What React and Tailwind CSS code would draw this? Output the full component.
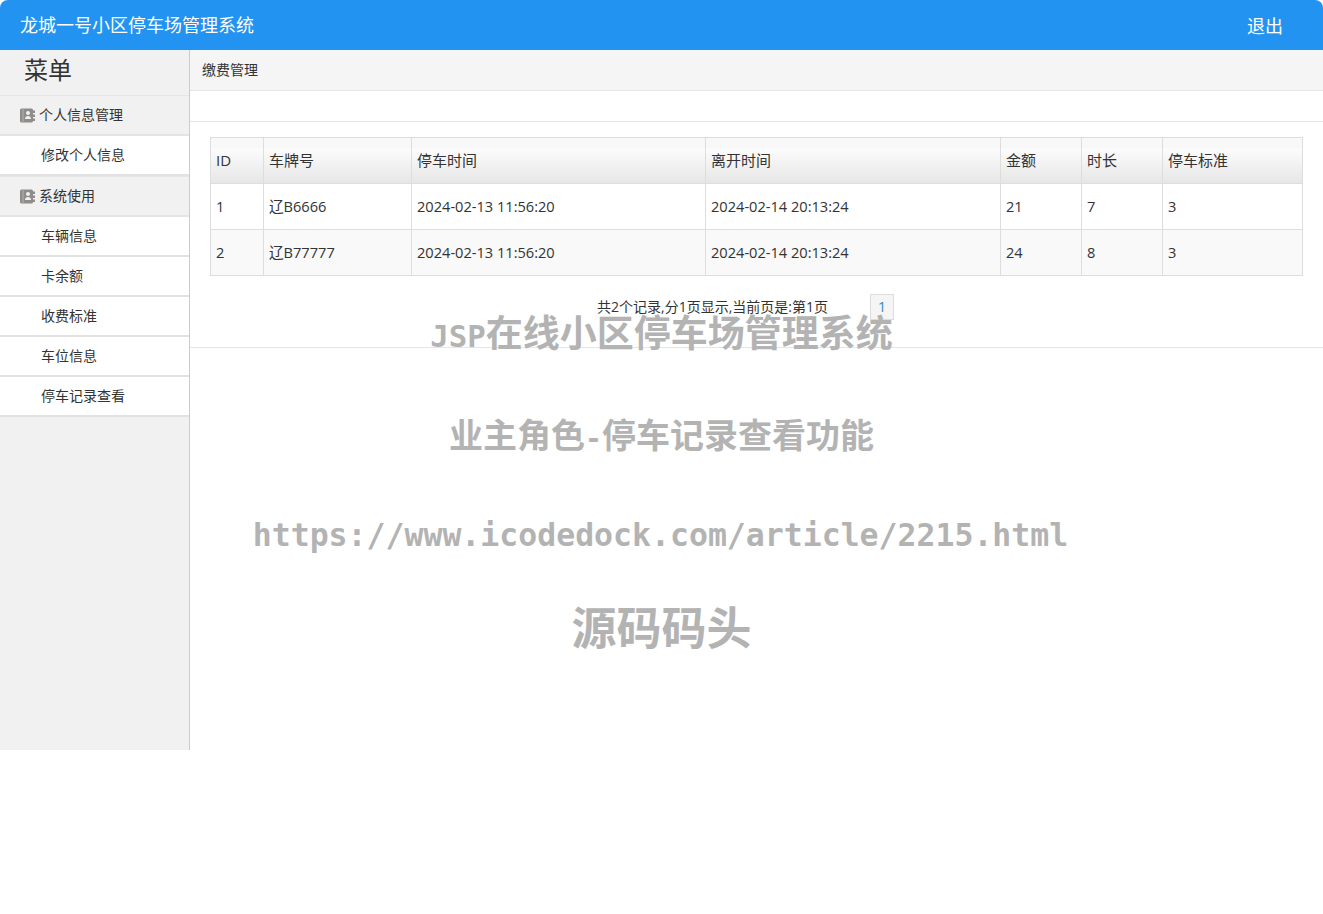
import React from 'react';

const cnFont = "font-['Open_Sans','Noto_Sans_CJK_SC',sans-serif]";

const BookIcon = () => (
  <svg width="15" height="15" viewBox="0 0 15 15" className="shrink-0">
    <rect x="0" y="0.500" width="13" height="14" rx="1.500" fill="#8f8c8a" />
    <rect x="2.500" y="0.500" width="1" height="14" fill="#b5b3b1" />
    <rect x="13" y="2.500" width="2" height="2.500" fill="#8f8c8a" />
    <rect x="13" y="6.500" width="2" height="2.500" fill="#8f8c8a" />
    <rect x="13" y="10.500" width="2" height="2.500" fill="#8f8c8a" />
    <circle cx="8" cy="5" r="2" fill="#f1f1f1" />
    <path d="M5 11c0-2 1.300-3 3-3s3 1 3 3z" fill="#f1f1f1" />
  </svg>
);

const groups = [
  { title: '个人信息管理', items: ['修改个人信息'] },
  { title: '系统使用', items: ['车辆信息', '卡余额', '收费标准', '车位信息', '停车记录查看'] },
];

const rows = [
  { id: 1, plate: '辽B6666', start: '2024-02-13 11:56:20', end: '2024-02-14 20:13:24', amount: 21, hours: 7, rate: 3 },
  { id: 2, plate: '辽B77777', start: '2024-02-13 11:56:20', end: '2024-02-14 20:13:24', amount: 24, hours: 8, rate: 3 },
];

const heads = [
  ['ID', 'w-[53px]'],
  ['车牌号', 'w-[148px]'],
  ['停车时间', 'w-[294px]'],
  ['离开时间', 'w-[295px]'],
  ['金额', 'w-[81px]'],
  ['时长', 'w-[81px]'],
  ['停车标准', 'w-[140px]'],
];

const Sidebar = () => (
  <aside className="w-[190px] shrink-0 border-r border-[#cccccc] bg-[#f1f1f1]">
    <div className="h-[45px] pl-6 text-[24px] leading-[40px] text-[#333333]">菜单</div>
    {groups.map((g) => (
      <div key={g.title}>
        <div className="box-content flex h-[38px] items-center gap-1 border-t border-b-2 border-t-[#e6e6e6] border-b-[#e4e4e4] pl-5 text-[14px] text-[#333333]">
          <BookIcon />
          <span className="mb-[2px]">{g.title}</span>
        </div>
        {g.items.map((item) => (
          <div key={item} className="box-content flex h-[38px] items-center border-b-2 border-[#e2e2e2] bg-white pl-[41px] text-[14px] text-[#333333]">
            <span className="mb-[2px]">{item}</span>
          </div>
        ))}
      </div>
    ))}
  </aside>
);

const RecordTable = () => (
  <table className="w-[1093px] table-fixed border-collapse text-[#333333]">
    <thead>
      <tr className="h-[46px] bg-[linear-gradient(#f8f8f8_0,#f8f8f8_10px,#fcfcfc_10px,#e6e6e6_100%)]">
        {heads.map(([label, w]) => (
          <th key={label} className={`${w} border border-[#dddddd] px-[5px] pb-[1px] text-left text-[15px] font-normal`}>{label}</th>
        ))}
      </tr>
    </thead>
    <tbody>
      {rows.map((r, i) => (
        <tr key={r.id} className={`h-[46px] ${i % 2 ? 'bg-[#f9f9f9]' : 'bg-white'}`}>
          {[r.id, r.plate, r.start, r.end, r.amount, r.hours, r.rate].map((v, j) => (
            <td key={j} className="border border-[#dddddd] px-[5px] text-[14.600px]">{v}</td>
          ))}
        </tr>
      ))}
    </tbody>
  </table>
);

const Watermark = () => (
  <div className="pointer-events-none absolute inset-x-0 top-[312px] flex flex-col items-center font-bold text-[#b3b3b3] font-['DejaVu_Sans_Mono','Noto_Sans_CJK_SC',monospace]">
    <div className="h-[46px] text-[37px] leading-[46px]"><span className="text-[30.700px]">JSP</span>在线小区停车场管理系统</div>
    <div className="mt-[55px] h-[46px] text-[34px] leading-[46px]">业主角色<span className="text-[28.200px]">-</span>停车记录查看功能</div>
    <div className="mt-[53px] h-[46px] pr-[2px] text-[31.500px] leading-[46px]">https://www.icodedock.com/article/2215.html</div>
    <div className="mt-[42px] h-[60px] text-[45px] leading-[60px]">源码码头</div>
  </div>
);

export default function App() {
  return (
    <div className={`relative min-h-[914px] bg-white ${cnFont}`}>
      <header className="flex h-[50px] items-center justify-between rounded-t-[8px] bg-[#2293f0] pl-5 pr-10 text-white">
        <h1 className="text-[18px] font-normal">龙城一号小区停车场管理系统</h1>
        <a className="mt-[2px] text-[18px]">退出</a>
      </header>
      <div className="flex h-[700px]">
        <Sidebar />
        <main className="flex-1">
          <div className="h-[41px] border-b border-[#e5e5e5] bg-[#f5f5f5] pl-3 text-[14px] leading-[39px] text-[#333333]">缴费管理</div>
          <div className="h-[31px] border-b border-[#e5e5e5]" />
          <div className="h-[226px] border-b border-[#e5e5e5] pl-5 pt-[15px]">
            <RecordTable />
            <div className="mt-[18px] flex items-center pl-[387px] text-[14px] text-[#333333]">
              <span className="mb-[2px] w-[273px]">共2个记录,分1页显示,当前页是:第1页</span>
              <span className="flex h-[26px] w-[24px] items-center justify-center border border-[#dddddd] bg-[#f5f5f5] pb-[2px] text-[15px] text-[#428bca]">1</span>
            </div>
          </div>
        </main>
      </div>
      <Watermark />
    </div>
  );
}
